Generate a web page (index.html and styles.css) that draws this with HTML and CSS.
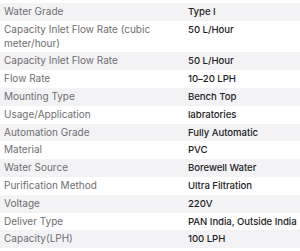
FILE: index.html
```html
<!DOCTYPE html>
<html>
<head>
<meta charset="utf-8">
<link rel="stylesheet" href="styles.css">
</head>
<body>
<div class="specs">
  <div class="row"><div class="k">Water Grade</div><div class="v">Type I</div></div>
  <div class="row"><div class="k">Capacity Inlet Flow Rate (cubic meter/hour)</div><div class="v">50 L/Hour</div></div>
  <div class="row"><div class="k">Capacity Inlet Flow Rate</div><div class="v">50 L/Hour</div></div>
  <div class="row"><div class="k">Flow Rate</div><div class="v">10–20 LPH</div></div>
  <div class="row"><div class="k">Mounting Type</div><div class="v">Bench Top</div></div>
  <div class="row"><div class="k">Usage/Application</div><div class="v">labratories</div></div>
  <div class="row"><div class="k">Automation Grade</div><div class="v">Fully Automatic</div></div>
  <div class="row"><div class="k">Material</div><div class="v">PVC</div></div>
  <div class="row"><div class="k">Water Source</div><div class="v">Borewell Water</div></div>
  <div class="row"><div class="k">Purification Method</div><div class="v">Ultra Filtration</div></div>
  <div class="row"><div class="k">Voltage</div><div class="v">220V</div></div>
  <div class="row"><div class="k">Deliver Type</div><div class="v">PAN India, Outside India</div></div>
  <div class="row"><div class="k">Capacity(LPH)</div><div class="v">100 LPH</div></div>
</div>
</body>
</html>
```
FILE: styles.css
```css
html, body {
  margin: 0;
  padding: 0;
  background: #ffffff;
}
body {
  padding-top: 3px;
  font-family: Inter, "Noto Sans", sans-serif;
  font-size: 10px;
  line-height: 13.8px;
}
.specs {
  display: flex;
  flex-direction: column;
}
.row {
  display: grid;
  grid-template-columns: 184px 1fr;
}
.row:nth-child(odd) {
  background: #f3f3f6;
}
.k {
  padding: 2px 4px;
  color: #6e6e6e;
}
.v {
  padding: 2px 0 2px 4px;
  color: #222222;
  font-weight: 500;
  font-size: 9.6px;
  letter-spacing: -0.05px;
  white-space: nowrap;
}
```
